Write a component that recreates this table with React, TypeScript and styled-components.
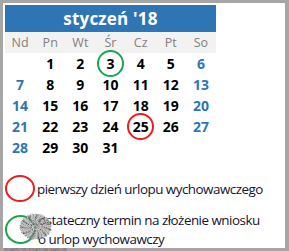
import React from 'react';
import styled, { createGlobalStyle } from 'styled-components';

const GlobalStyle = createGlobalStyle`
    html, body {
        margin: 0;
        padding: 0;
        background: #ffffff;
    }
`

const Page = styled.div`
    position: relative;
    width: 289px;
    height: 251px;
    overflow: hidden;
`

const Frame = styled.div`
    box-sizing: border-box;
    width: 289px;
    height: 251px;
    border-style: solid;
    border-color: #a6a6a6;
    border-width: 3px 4px 3px 3px;
    background: #ffffff;
    padding: 2px 0 0 2px;
    overflow: hidden;
`

const Calendar = styled.div`
    width: 211px;
    display: grid;
    grid-template-columns: repeat(7, 1fr);
    font-family: 'Open Sans', 'Noto Sans', sans-serif;
`

const Header = styled.div`
    grid-column: 1 / span 7;
    height: 27px;
    background: #2e75b6;
    color: #ffffff;
    font-weight: 700;
    font-size: 17px;
    display: flex;
    align-items: center;
    justify-content: center;
    letter-spacing: 0.2px;
`

const DayName = styled.div`
    height: 21px;
    background: #f2f2f2;
    color: #7f7f7f;
    font-size: 12.5px;
    display: flex;
    align-items: center;
    justify-content: center;
`

const DayCell = styled.div<{ weekend?: boolean }>`
    position: relative;
    height: 21px;
    display: flex;
    align-items: center;
    justify-content: center;
    font-size: 14px;
    font-weight: 700;
    color: ${props => props.weekend ? '#2e75b6' : '#000000'};
`

const Ring = styled.span<{ ringColor: string }>`
    position: absolute;
    left: 50%;
    top: 50%;
    width: 23px;
    height: 23px;
    margin-left: -13.5px;
    margin-top: -13.5px;
    border: 2px solid ${props => props.ringColor};
    border-radius: 50%;
`

const Legend = styled.div`
    display: flex;
    flex-direction: column;
    gap: 10px;
    margin-top: 17px;
    font-family: 'Open Sans', 'Noto Sans', sans-serif;
    font-size: 13.4px;
    color: #141432;
`

const LegendRow = styled.div`
    display: flex;
    align-items: center;
    gap: 2px;
`

const LegendMark = styled.span<{ ringColor: string, w: number, h: number }>`
    flex: none;
    box-sizing: border-box;
    width: ${props => props.w}px;
    height: ${props => props.h}px;
    border: 2px solid ${props => props.ringColor};
    border-radius: 50%;
`

const LegendText = styled.div`
    display: flex;
    flex-direction: column;
    gap: 3px;
    line-height: 16px;
    letter-spacing: -0.5px;
    white-space: nowrap;
`

const Stamp = styled.svg`
    position: absolute;
    left: 3px;
    top: 211px;
`

const days = ['Nd', 'Pn', 'Wt', 'Śr', 'Cz', 'Pt', 'So'];
const cells: (number | null)[] = [null, ...Array.from({ length: 31 }, (_, i) => i + 1)];
const rings: Record<number, string> = { 3: '#1aa64a', 25: '#ee1c1c' };

// gray speckle of the watermark stamp
const specks = Array.from({ length: 340 }, (_, i) => {
    const a = (i * 137.5) * Math.PI / 180;
    const r = Math.sqrt(i / 340) * 15;
    const k = (i * 7) % 5;
    return { x: 32 + Math.cos(a) * r * 1.05, y: 15 + Math.sin(a) * r * 0.85, s: k === 0 ? '#555555' : k < 3 ? '#8a8a8a' : '#b4b4b4' };
});

export default function App() {
    return (
        <Page>
            <GlobalStyle />
            <Frame>
                <Calendar>
                    <Header>styczeń '18</Header>
                    {days.map(d => <DayName key={d}>{d}</DayName>)}
                    {cells.map((n, i) => (
                        <DayCell key={i} weekend={i % 7 === 0 || i % 7 === 6}>
                            {n}
                            {n && rings[n] ? <Ring ringColor={rings[n]} /> : null}
                        </DayCell>
                    ))}
                </Calendar>
                <Legend>
                    <LegendRow>
                        <LegendMark ringColor="#ee1c1c" w={30} h={27} />
                        <LegendText><span>pierwszy dzień urlopu wychowawczego</span></LegendText>
                    </LegendRow>
                    <LegendRow>
                        <LegendMark ringColor="#1aa64a" w={31} h={29} />
                        <LegendText>
                            <span>ostateczny termin na złożenie wniosku</span>
                            <span>o urlop wychowawczy</span>
                        </LegendText>
                    </LegendRow>
                </Legend>
            </Frame>
            <Stamp width="80" height="40" viewBox="0 0 80 40">
                {specks.map((p, i) => (
                    <rect key={i} x={p.x} y={p.y} width="1.3" height="1.3" fill={p.s} />
                ))}
                <text x="1" y="39.6" fontSize="3" fill="#5a5a5a" fontFamily="'Liberation Sans', sans-serif">WYDAWNICTWO PODATKOWE FINANSOWE</text>
            </Stamp>
        </Page>
    );
}
